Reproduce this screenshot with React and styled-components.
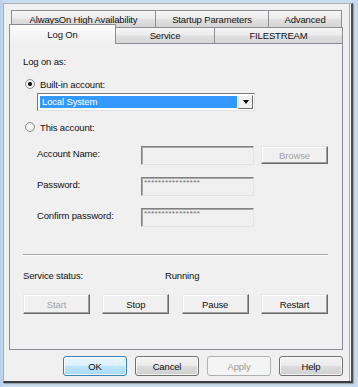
import React from "react";
import styled, { createGlobalStyle, css } from "styled-components";

const Global = createGlobalStyle`
  html, body {
    margin: 0;
    padding: 0;
    background: #c6d9ef;
  }
  body {
    font-family: "Liberation Sans", Arial, sans-serif;
    font-size: 9.5px;
    letter-spacing: -0.15px;
    color: #111;
  }
`;

const Frame = styled.div`
  width: 358px;
  height: 387px;
  box-sizing: border-box;
  overflow: hidden;
  padding: 3px 0 0 3px;
  background: linear-gradient(90deg, #b4cdea, #c9dbef 4px, #c9dbef);
`;

const Dialog = styled.div`
  width: 350px;
  height: 380px;
  box-sizing: border-box;
  background: #f0f0f0;
  border-left: 1px solid #a6adb6;
  border-top: 1px solid #a6adb6;
  border-right: 2px solid #4f4f4f;
  border-bottom: 2px solid #3c3c3c;
  box-shadow: inset -1px 0 0 #fff, inset -2px 0 0 #a9a9a9, 1px 1px 1px rgba(0, 0, 0, 0.25);
  padding: 6px 0 0 5px;
  display: flex;
  flex-direction: column;
`;

const TabRow = styled.div`
  display: flex;
  align-items: flex-start;
  height: ${(p) => p.$h}px;
  margin-left: ${(p) => p.$indent || 0}px;
`;

const Tab = styled.div`
  box-sizing: border-box;
  width: ${(p) => p.$w}px;
  height: ${(p) => p.$h}px;
  border: 1px solid #8c8e94;
  border-bottom: none;
  background: linear-gradient(#f6f6f6, #ececec 45%, #dfdfdf 55%, #d6d6d6);
  display: flex;
  align-items: center;
  justify-content: center;
  white-space: nowrap;
  & + & {
    margin-left: -1px;
  }
  ${(p) =>
    p.$active &&
    css`
      position: relative;
      z-index: 1;
      height: 20px;
      margin-top: -3px;
      background: linear-gradient(#fefefe, #f4f4f4 60%, #f0f0f0);
      border-color: #898c95;
    `}
`;

const Panel = styled.div`
  box-sizing: border-box;
  width: 334px;
  height: 307px;
  border: 1px solid #898c95;
  background: #f0f0f0;
  padding: 12px 0 0 13px;
  display: flex;
  flex-direction: column;
`;

const Text = styled.div`
  line-height: 12px;
  height: 12px;
  white-space: nowrap;
`;

const RadioRow = styled.div`
  display: flex;
  align-items: center;
  gap: 5px;
  height: 12px;
  margin-top: 10px;
  margin-left: 2px;
`;

const Radio = styled.span`
  box-sizing: border-box;
  width: 10px;
  height: 10px;
  border-radius: 50%;
  border: 1px solid #8e8f8f;
  background: ${(p) =>
    p.$checked
      ? "radial-gradient(circle, #1e1e1e 0 1.8px, #f6f6f6 2.4px, #dedede)"
      : "radial-gradient(circle, #fbfbfb, #e2e2e2)"};
`;

const SelectBox = styled.div`
  box-sizing: border-box;
  display: flex;
  width: 218px;
  height: 18px;
  margin: 3px 0 0 14px;
  padding: 1px;
  background: #fff;
  border: 1px solid;
  border-color: #7b7b7b #e2e2e2 #e2e2e2 #7b7b7b;
`;

const Highlight = styled.div`
  flex: 1;
  margin: 1px;
  background: #3399ff;
  color: #fff;
  padding-left: 2px;
  line-height: 12px;
`;

const DropButton = styled.div`
  box-sizing: border-box;
  width: 15px;
  height: 100%;
  background: #f0f0f0;
  border: 1px solid;
  border-color: #fff #6d6d6d #6d6d6d #e3e3e3;
  display: flex;
  align-items: center;
  justify-content: center;
  &::after {
    content: "";
    border-left: 3.5px solid transparent;
    border-right: 3.5px solid transparent;
    border-top: 4px solid #000;
  }
`;

const FieldRow = styled.div`
  display: flex;
  align-items: flex-start;
  height: 19px;
  margin: ${(p) => p.$mt}px 0 0 14px;
`;

const FieldLabel = styled.div`
  width: 104px;
  line-height: 15px;
  white-space: nowrap;
`;

const TextBox = styled.div`
  box-sizing: border-box;
  width: 113px;
  height: 19px;
  background: #f0f0f0;
  border: 1px solid;
  border-color: #828282 #e3e3e3 #e3e3e3 #828282;
  box-shadow: inset 1px 1px 0 #a8a8a8;
  color: #6a6a6a;
  font-size: 8px;
  letter-spacing: 0.4px;
  line-height: 9px;
  padding-left: 2px;
  overflow: hidden;
  white-space: nowrap;
`;

const ClassicButton = styled.div`
  box-sizing: border-box;
  width: 67px;
  height: ${(p) => p.$h || 20}px;
  margin-left: ${(p) => p.$ml || 0}px;
  display: flex;
  align-items: center;
  justify-content: center;
  background: #f0f0f0;
  border: 1px solid;
  border-color: #e6e6e6 #6a6a6a #6a6a6a #e6e6e6;
  box-shadow: inset -1px -1px 0 #a0a0a0, inset 1px 1px 0 #fff;
  color: ${(p) => (p.$disabled ? "#a3a3a3" : "#111")};
`;

const Separator = styled.div`
  width: 305px;
  margin-top: 27px;
  border-top: 1px solid #a8a8a8;
  border-bottom: 1px solid #fff;
`;

const StatusRow = styled.div`
  display: flex;
  margin-top: 14px;
  line-height: 12px;
  height: 12px;
`;

const StatusLabel = styled.div`
  width: 142px;
`;

const ButtonRow = styled.div`
  display: flex;
  justify-content: space-between;
  width: 305px;
  margin-top: 12px;
`;

const FooterRow = styled.div`
  display: flex;
  justify-content: flex-end;
  gap: 8px;
  width: 334px;
  margin-top: 6px;
`;

const AeroButton = styled.div`
  box-sizing: border-box;
  width: 64px;
  height: 20px;
  border-radius: 3px;
  border: 1px solid #707070;
  background: linear-gradient(#f2f2f2, #ebebeb 50%, #dddddd 50%, #cfcfcf);
  box-shadow: inset 0 0 0 1px rgba(255, 255, 255, 0.75);
  display: flex;
  align-items: center;
  justify-content: center;
  color: #111;
  ${(p) =>
    p.$default &&
    css`
      border-color: #3c7fb1;
      background: linear-gradient(#eaf6fd, #d9f0fc 50%, #bee6fd 50%, #a7d9f5);
    `}
  ${(p) =>
    p.$disabled &&
    css`
      border-color: #adb2b5;
      background: #f4f4f4;
      box-shadow: none;
      color: #9a9a9a;
    `}
`;

const stars = "****************";

export default function App() {
  return (
    <Frame>
      <Global />
      <Dialog>
        <TabRow $h={17} $indent={2}>
          <Tab $w={145} $h={17}>AlwaysOn High Availability</Tab>
          <Tab $w={114} $h={17}>Startup Parameters</Tab>
          <Tab $w={74} $h={17}>Advanced</Tab>
        </TabRow>
        <TabRow $h={16}>
          <Tab $w={107} $h={16} $active>Log On</Tab>
          <Tab $w={100} $h={16}>Service</Tab>
          <Tab $w={129} $h={16}>FILESTREAM</Tab>
        </TabRow>
        <Panel>
          <Text>Log on as:</Text>
          <RadioRow>
            <Radio $checked />
            <span>Built-in account:</span>
          </RadioRow>
          <SelectBox>
            <Highlight>Local System</Highlight>
            <DropButton />
          </SelectBox>
          <RadioRow>
            <Radio />
            <span>This account:</span>
          </RadioRow>
          <FieldRow $mt={13}>
            <FieldLabel>Account Name:</FieldLabel>
            <TextBox />
            <ClassicButton $disabled $h={18} $ml={7}>Browse</ClassicButton>
          </FieldRow>
          <FieldRow $mt={12}>
            <FieldLabel>Password:</FieldLabel>
            <TextBox>{stars}</TextBox>
          </FieldRow>
          <FieldRow $mt={12}>
            <FieldLabel>Confirm password:</FieldLabel>
            <TextBox>{stars}</TextBox>
          </FieldRow>
          <Separator />
          <StatusRow>
            <StatusLabel>Service status:</StatusLabel>
            <div>Running</div>
          </StatusRow>
          <ButtonRow>
            <ClassicButton $disabled>Start</ClassicButton>
            <ClassicButton>Stop</ClassicButton>
            <ClassicButton>Pause</ClassicButton>
            <ClassicButton>Restart</ClassicButton>
          </ButtonRow>
        </Panel>
        <FooterRow>
          <AeroButton $default>OK</AeroButton>
          <AeroButton>Cancel</AeroButton>
          <AeroButton $disabled>Apply</AeroButton>
          <AeroButton>Help</AeroButton>
        </FooterRow>
      </Dialog>
    </Frame>
  );
}
